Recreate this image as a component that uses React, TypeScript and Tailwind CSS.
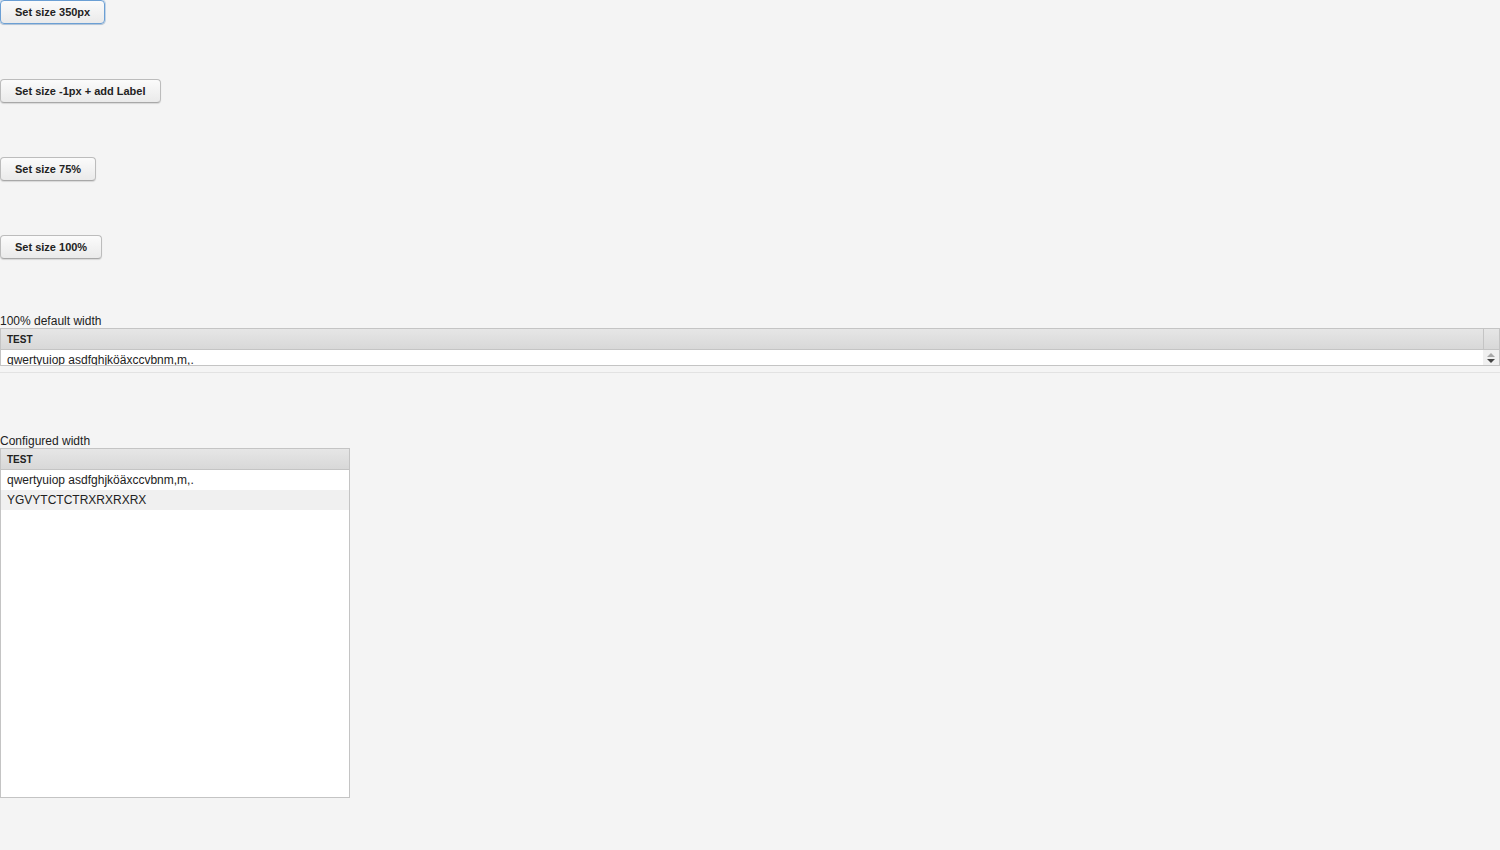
import React from 'react';

const font = { fontFamily: '"Liberation Sans", Arial, sans-serif' };

function Btn({ label, focused, className = '' }: { label: string; focused?: boolean; className?: string }) {
  return (
    <button
      className={
        (focused
          ? 'h-[24px] self-start rounded-[4px] border border-[#6b9fd4] bg-gradient-to-b from-[#fbfbfb] to-[#eaeaea] px-[14px] text-[11px] font-bold leading-none text-[#222] shadow-[0_0_0_1px_rgba(107,159,212,0.35),0_1px_1px_rgba(0,0,0,0.12)]'
          : 'h-[24px] self-start rounded-[4px] border border-[#bcbcbc] border-b-[#a8a8a8] bg-gradient-to-b from-[#fbfbfb] to-[#eaeaea] px-[14px] text-[11px] font-bold leading-none text-[#222] shadow-[0_1px_1px_rgba(0,0,0,0.12)]') +
        ' ' +
        className
      }
    >
      {label}
    </button>
  );
}

function Header({ scroll }: { scroll?: boolean }) {
  return (
    <div className="flex h-[21px] border-b border-[#c4c4c4] bg-gradient-to-b from-[#e6e6e6] to-[#d8d8d8]">
      <div className="flex flex-1 items-center px-[6px] text-[10px] font-bold text-[#222]">TEST</div>
      {scroll && <div className="w-[16px] border-l border-[#c4c4c4]" />}
    </div>
  );
}

export default function App() {
  return (
    <div className="min-h-[850px] bg-[#f4f4f4] text-[#222]" style={font}>
      <div className="flex flex-col">
        <Btn label="Set size 350px" focused />
        <Btn label="Set size -1px + add Label" className="mt-[55px]" />
        <Btn label="Set size 75%" className="mt-[54px]" />
        <Btn label="Set size 100%" className="mt-[54px]" />
      </div>

      {/* 100% default width */}
      <div className="mt-[55px] text-[12px] leading-[15px] text-[#222]">100% default width</div>
      <div className="-mt-px h-[38px] overflow-hidden border border-[#c4c4c4] bg-white">
        <Header scroll />
        <div className="flex h-[20px]">
          <div className="flex flex-1 items-center px-[6px] text-[12px] leading-none">qwertyuiop asdfghjköäxccvbnm,m,.</div>
          <div className="flex w-[16px] flex-col items-center bg-[#f0f0f0] pt-[2px]">
            <svg width="10" height="11" viewBox="0 0 10 11">
              <path d="M1 5 L5 1 L9 5 Z" fill="#a8a8a8" />
              <path d="M1 7 L9 7 L5 11 Z" fill="#444" />
            </svg>
          </div>
        </div>
      </div>
      <div className="mt-[6px] h-px bg-[#e2e2e2]" />

      {/* Configured width */}
      <div className="mt-[61px] text-[12px] leading-[15px] text-[#222]">Configured width</div>
      <div className="-mt-px h-[350px] w-[350px] border border-[#c4c4c4] bg-white">
        <Header />
        <div className="flex h-[20px] items-center px-[6px] text-[12px]">qwertyuiop asdfghjköäxccvbnm,m,.</div>
        <div className="flex h-[20px] items-center bg-[#f0f0f0] px-[6px] text-[12px]">YGVYTCTCTRXRXRXRX</div>
      </div>
    </div>
  );
}
